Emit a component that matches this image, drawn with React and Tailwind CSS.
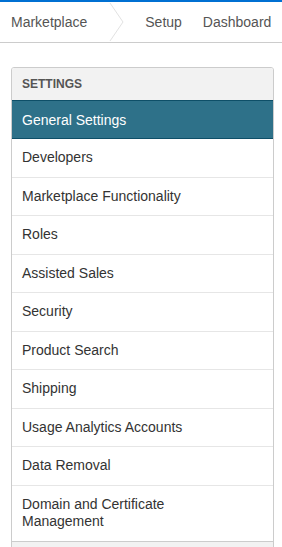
import React from 'react';

const items = [
  'Developers',
  'Marketplace Functionality',
  'Roles',
  'Assisted Sales',
  'Security',
  'Product Search',
  'Shipping',
  'Usage Analytics Accounts',
  'Data Removal',
  'Domain and Certificate Management',
];

function App() {
  return (
    <div className="min-h-screen bg-white font-['Liberation_Sans',Arial,sans-serif] text-[14px] text-[#333]">
      <div className="h-[2px] bg-[#0070d2]" />
      <nav className="flex h-[41px] items-center border-b border-[#cccccc] text-[#555]">
        <span className="pl-[11px] leading-[18px]">Marketplace</span>
        <svg className="ml-[22px] h-[40px] w-[16px] self-start" viewBox="0 0 16 40" fill="none">
          <polyline points="1,1 14,20 1,39" stroke="#e2e2e2" strokeWidth="1" />
        </svg>
        <span className="ml-[20px] leading-[18px]">Setup</span>
        <span className="ml-[21px] leading-[18px]">Dashboard</span>
      </nav>

      <div className="ml-[11px] mt-[24px] w-[263px] rounded-[3px] border border-[#cccccc] overflow-hidden">
        <div className="h-[32px] bg-[#f2f2f2] pl-[10px] text-[12px] font-bold leading-[32px] text-[#555]">
          SETTINGS
        </div>
        <div className="border-y border-[#0e4f68] bg-[#2e7189] py-[9.5px] pl-[10px] leading-[18px] text-white">
          General Settings
        </div>
        {items.map((item, i) => (
          <div
            key={item}
            className={`pl-[10px] pr-[40px] py-[10px] leading-[17.5px] ${i > 0 ? 'border-t border-[#e6e6e6]' : ''}`}
          >
            {item}
          </div>
        ))}
        <div className="h-[20px] border-t border-[#cccccc] bg-[#f2f2f2]" />
      </div>
    </div>
  );
}

export default App;
